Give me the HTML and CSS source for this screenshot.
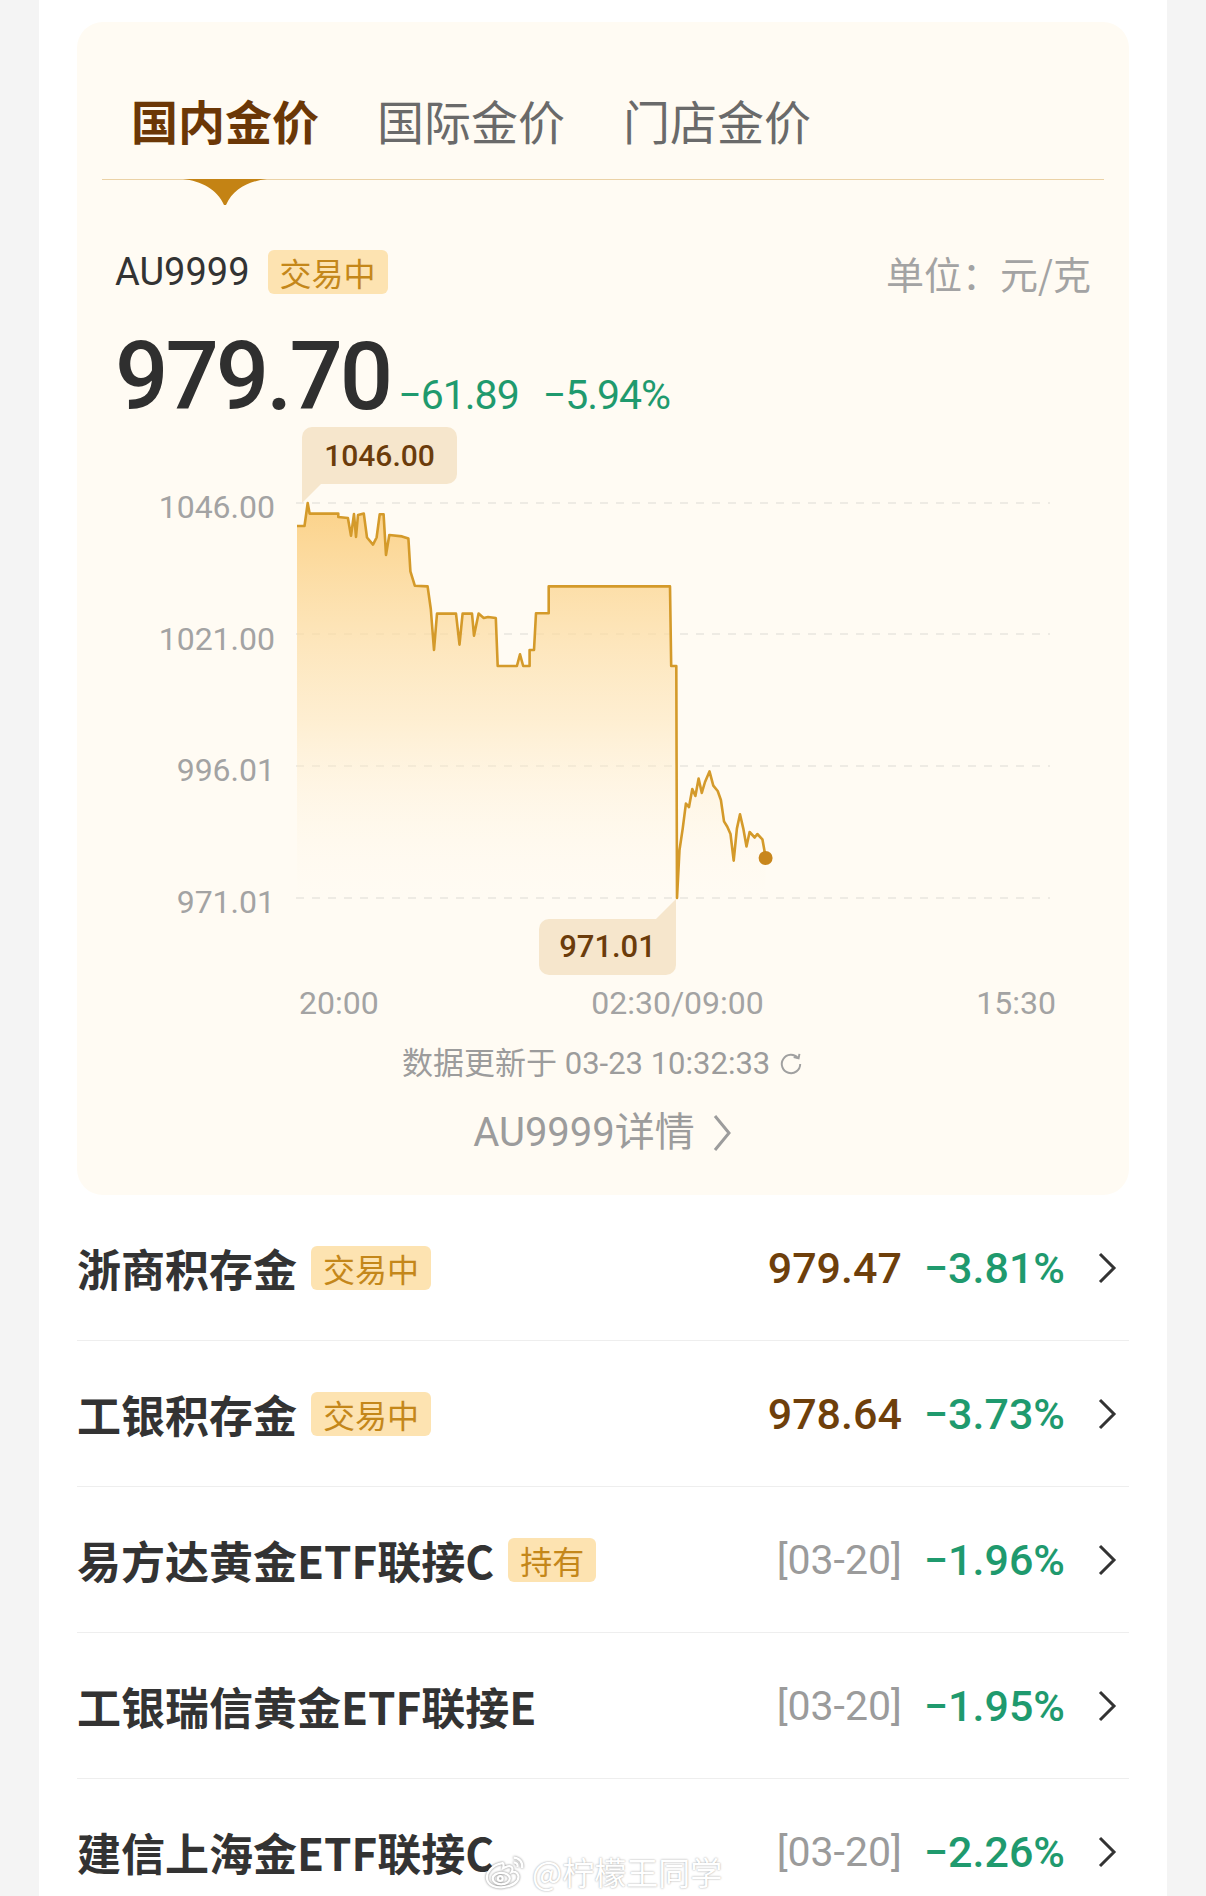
FILE: index.html
```html
<!DOCTYPE html>
<html lang="zh-CN">
<head>
  <meta charset="UTF-8">
  <meta name="viewport" content="width=device-width, initial-scale=1.0">
  <title>黄金行情</title>
  <link rel="stylesheet" href="styles.css">
</head>
<body>
  <div class="page">
    <section class="gold-card">
      <nav class="tabs">
        <span class="tab active">国内金价
          <svg class="tab-arrow" width="84" height="26" viewBox="0 0 84 26"><path d="M0 0H84C66 2 50 10 43 26H41C34 10 18 2 0 0Z" fill="#c48314"/></svg>
        </span>
        <span class="tab">国际金价</span>
        <span class="tab">门店金价</span>
      </nav>

      <div class="quote-head">
        <span class="code">AU9999</span>
        <span class="tag">交易中</span>
        <span class="unit">单位：元/克</span>
      </div>

      <div class="quote-price">
        <span class="price">979.70</span>
        <span class="change">−61.89</span>
        <span class="change">−5.94%</span>
      </div>

      <div class="chart">
        <div class="y-axis">
          <span>1046.00</span>
          <span>1021.00</span>
          <span>996.01</span>
          <span>971.01</span>
        </div>
        <div class="plot">
          <svg width="754" height="555" viewBox="296 421 754 555">
            <defs>
              <linearGradient id="fade" x1="0" y1="503" x2="0" y2="898" gradientUnits="userSpaceOnUse">
                <stop offset="0" stop-color="#fbcd7c" stop-opacity="0.9"/>
                <stop offset="0.55" stop-color="#fde4b6" stop-opacity="0.55"/>
                <stop offset="1" stop-color="#fff6e6" stop-opacity="0"/>
              </linearGradient>
            </defs>
            <g stroke="#e9e6e0" stroke-width="1.5" stroke-dasharray="8 8">
              <line x1="296" y1="503" x2="1050" y2="503"/>
              <line x1="296" y1="634" x2="1050" y2="634"/>
              <line x1="296" y1="766" x2="1050" y2="766"/>
              <line x1="296" y1="898" x2="1050" y2="898"/>
            </g>
            <path fill="url(#fade)" d="M297 526 L304.5 526 L307.7 503 L309.6 513.6 L338.3 513.6 L338.3 517 L347.9 518 L351 535.7 L354 514 L356 537 L358 515 L363.8 513.6 L367 537.5 L373 544.6 L376.6 537.5 L379.7 514.3 L383.6 514.3 L386 555 L389.3 535 L402 536.4 L408.4 538.6 L410.4 571.4 L414.8 585.7 L427.6 586.4 L430.8 609 L434 650 L437 613.6 L456 613.6 L459.5 644.6 L462.6 613.6 L472 613.6 L474 635.7 L478.6 613.6 L483.7 618 L488 617 L495.8 618 L497.7 666 L516.9 666 L520 654.3 L523.2 666 L529.6 666 L529.6 650 L534 650 L536 613.2 L548.7 613.2 L548.7 586.4 L670 586.4 L671.2 666 L676.3 666 L677 898 L679.5 850 L682.7 828.6 L685.9 803.6 L689 807 L692.3 789 L695.4 796 L698.6 778.6 L701.8 792.9 L705 782 L709.5 771.4 L713.3 785.7 L717.7 791 L720.9 800 L724 821.4 L727.3 826.8 L730.5 834 L733.7 860.7 L736.9 828.6 L740 814.3 L743.3 828.6 L746.5 846.4 L749.6 832 L754.7 837.5 L757.3 834 L762.4 839.3 L765.6 857 L765.6 898 L297 898Z"/>
            <path fill="none" stroke="#d49a2a" stroke-width="2.6" stroke-linejoin="round" d="M297 526 L304.5 526 L307.7 503 L309.6 513.6 L338.3 513.6 L338.3 517 L347.9 518 L351 535.7 L354 514 L356 537 L358 515 L363.8 513.6 L367 537.5 L373 544.6 L376.6 537.5 L379.7 514.3 L383.6 514.3 L386 555 L389.3 535 L402 536.4 L408.4 538.6 L410.4 571.4 L414.8 585.7 L427.6 586.4 L430.8 609 L434 650 L437 613.6 L456 613.6 L459.5 644.6 L462.6 613.6 L472 613.6 L474 635.7 L478.6 613.6 L483.7 618 L488 617 L495.8 618 L497.7 666 L516.9 666 L520 654.3 L523.2 666 L529.6 666 L529.6 650 L534 650 L536 613.2 L548.7 613.2 L548.7 586.4 L670 586.4 L671.2 666 L676.3 666 L677 898 L679.5 850 L682.7 828.6 L685.9 803.6 L689 807 L692.3 789 L695.4 796 L698.6 778.6 L701.8 792.9 L705 782 L709.5 771.4 L713.3 785.7 L717.7 791 L720.9 800 L724 821.4 L727.3 826.8 L730.5 834 L733.7 860.7 L736.9 828.6 L740 814.3 L743.3 828.6 L746.5 846.4 L749.6 832 L754.7 837.5 L757.3 834 L762.4 839.3 L765.6 857"/>
            <circle cx="765.6" cy="858" r="7" fill="#c8861c"/>
            <!-- tooltip pointers -->
            <polygon points="302,483 322,483 302,503" fill="#f6e6cc"/>
            <polygon points="676,919 656,919 676,899" fill="#f6e6cc"/>
          </svg>
          <div class="tip tip-high">1046.00</div>
          <div class="tip tip-low">971.01</div>
        </div>
      </div>

      <div class="x-axis">
        <span>20:00</span>
        <span>02:30/09:00</span>
        <span>15:30</span>
      </div>

      <p class="update">数据更新于 03-23 10:32:33
        <svg width="26" height="26" viewBox="0 0 24 24"><path d="M18.5 6.5A8.5 8.5 0 1 0 20.5 12" fill="none" stroke="#a0a0a0" stroke-width="1.8"/><path d="M14.5 5.5L19 6.8L19.8 2.6" fill="none" stroke="#a0a0a0" stroke-width="1.8"/></svg>
      </p>

      <a class="detail">AU9999详情
        <svg width="22" height="40" viewBox="0 0 22 40"><polyline points="4,3 18,20 4,37" fill="none" stroke="#9c9c9c" stroke-width="3"/></svg>
      </a>
    </section>

    <ul class="fund-list">
      <li class="fund">
        <span class="name">浙商积存金</span>
        <span class="tag">交易中</span>
        <span class="value">979.47</span>
        <span class="pct">−3.81%</span>
        <svg class="arrow" width="24" height="36" viewBox="0 0 24 36"><polyline points="5,4 19,18 5,32" fill="none" stroke="#333" stroke-width="3"/></svg>
      </li>
      <li class="fund">
        <span class="name">工银积存金</span>
        <span class="tag">交易中</span>
        <span class="value">978.64</span>
        <span class="pct">−3.73%</span>
        <svg class="arrow" width="24" height="36" viewBox="0 0 24 36"><polyline points="5,4 19,18 5,32" fill="none" stroke="#333" stroke-width="3"/></svg>
      </li>
      <li class="fund">
        <span class="name">易方达黄金ETF联接C</span>
        <span class="tag">持有</span>
        <span class="date">[03-20]</span>
        <span class="pct">−1.96%</span>
        <svg class="arrow" width="24" height="36" viewBox="0 0 24 36"><polyline points="5,4 19,18 5,32" fill="none" stroke="#333" stroke-width="3"/></svg>
      </li>
      <li class="fund">
        <span class="name">工银瑞信黄金ETF联接E</span>
        <span class="date">[03-20]</span>
        <span class="pct">−1.95%</span>
        <svg class="arrow" width="24" height="36" viewBox="0 0 24 36"><polyline points="5,4 19,18 5,32" fill="none" stroke="#333" stroke-width="3"/></svg>
      </li>
      <li class="fund">
        <span class="name">建信上海金ETF联接C</span>
        <span class="date">[03-20]</span>
        <span class="pct">−2.26%</span>
        <svg class="arrow" width="24" height="36" viewBox="0 0 24 36"><polyline points="5,4 19,18 5,32" fill="none" stroke="#333" stroke-width="3"/></svg>
      </li>
    </ul>

    <div class="watermark">
      <svg width="44" height="38" viewBox="0 0 46 40">
        <g fill="none" stroke="#fff" stroke-width="2.4">
          <path d="M18 12C8 14 2 22 3 28C4 35 12 38 20 37C30 36 37 31 36 25C35 21 31 20 29 21C31 17 29 14 25 15C22 16 20 17 20 17C21 13 20 11 18 12Z"/>
          <ellipse cx="18" cy="28" rx="9" ry="6"/>
          <circle cx="17" cy="28" r="2.5"/>
          <path d="M31 6C37 6 41 11 40 17"/>
          <path d="M31 11C34 11 36 13 35 16"/>
        </g>
      </svg>
      <span>@柠檬王同学</span>
    </div>
  </div>
</body>
</html>
```

FILE: styles.css
```css
body {
  margin: 0;
  background: #f4f4f4;
  font-family: "Roboto", "Noto Sans CJK SC", sans-serif;
  color: #333;
}

.page {
  position: relative;
  width: 1128px;
  min-height: 1896px;
  margin: 0 auto;
  padding: 22px 38px 0;
  box-sizing: border-box;
  background: #fff;
  overflow: hidden;
}

/* 金价卡片 */
.gold-card {
  background: #fffbf3;
  border-radius: 26px;
  padding: 0 38px 37px;
}

.tabs {
  display: flex;
  gap: 58px;
  margin: 0 -13px;
  padding: 70px 0 31px 29px;
  border-bottom: 1px solid #ebd2a6;
}

.tab {
  position: relative;
  font-family: "Noto Sans CJK SC", sans-serif;
  font-size: 47px;
  line-height: 56px;
  color: #6a6a6a;
}

.tab.active {
  color: #6b3706;
  font-weight: 700;
}

.tab-arrow {
  position: absolute;
  left: 50%;
  top: calc(100% + 31px);
  margin-left: -42px;
}

.quote-head {
  display: flex;
  align-items: center;
  height: 44px;
  margin-top: 70px;
}

.code {
  font-size: 38px;
  color: #333;
}

.tag {
  display: inline-block;
  height: 44px;
  padding: 0 12px;
  margin-left: 18px;
  border-radius: 6px;
  background: #fde3b1;
  color: #c4871a;
  font-family: "Noto Sans CJK SC", sans-serif;
  font-size: 32px;
  line-height: 44px;
}

.unit {
  margin-left: auto;
  font-family: "Noto Sans CJK SC", sans-serif;
  font-size: 38px;
  color: #a3a3a3;
}

.quote-price {
  display: flex;
  align-items: baseline;
  margin-top: 39px;
  height: 88px;
  line-height: 88px;
}

.price {
  font-size: 94px;
  font-weight: 500;
  letter-spacing: -3px;
  color: #2f2f2f;
}

.change {
  font-size: 41px;
  line-height: 44px;
  letter-spacing: -1px;
  color: #1f9a6e;
  margin-left: 8px;
}

.change + .change {
  margin-left: 24px;
}

/* 走势图 */
.chart {
  display: flex;
  gap: 21px;
  height: 555px;
}

.y-axis {
  width: 160px;
  display: flex;
  flex-direction: column;
  align-items: flex-end;
  gap: 91.7px;
  padding-top: 66px;
}

.y-axis span {
  font-size: 32px;
  line-height: 40px;
  color: #a3a3a3;
}

.plot {
  position: relative;
  width: 754px;
}

.plot svg {
  display: block;
}

.tip {
  position: absolute;
  background: #f6e6cc;
  color: #6b3c0b;
  font-weight: 500;
  text-align: center;
}

.tip-high {
  left: 6px;
  top: 6px;
  width: 155px;
  height: 57px;
  font-size: 30px;
  line-height: 57px;
  border-radius: 10px 10px 10px 0;
}

.tip-low {
  left: 243px;
  top: 498px;
  width: 137px;
  height: 56px;
  font-size: 31px;
  line-height: 56px;
  border-radius: 10px 0 10px 10px;
}

.x-axis {
  display: flex;
  justify-content: space-between;
  width: 757px;
  margin-left: 184px;
  line-height: 54px;
  font-size: 32px;
  color: #a3a3a3;
}

.update {
  margin: 14px 0 0;
  text-align: center;
  font-size: 31px;
  line-height: 40px;
  color: #9c9c9c;
}

.update svg {
  vertical-align: -3px;
}

.detail {
  display: flex;
  justify-content: center;
  align-items: center;
  gap: 16px;
  margin-top: 24px;
  font-size: 40px;
  line-height: 50px;
  color: #9c9c9c;
}

/* 基金列表 */
.fund-list {
  list-style: none;
  margin: 0;
  padding: 0;
}

.fund {
  display: flex;
  align-items: center;
  height: 145px;
  border-bottom: 1px solid #eeeeee;
}

.name {
  font-family: "Noto Sans CJK SC", sans-serif;
  font-size: 44px;
  font-weight: 700;
  color: #333;
}

.fund .tag {
  margin-left: 14px;
}

.value,
.date {
  margin-left: auto;
  font-size: 43px;
}

.value {
  font-weight: 500;
  color: #6e3f0b;
}

.date {
  font-size: 41px;
  color: #9b9b9b;
}

.pct {
  margin-left: 22px;
  font-size: 43px;
  font-weight: 500;
  color: #1f9a6e;
}

.arrow {
  margin-left: 30px;
  margin-right: 10px;
}

.watermark {
  position: absolute;
  left: 445px;
  top: 1848px;
  display: flex;
  align-items: center;
  gap: 4px;
  font-family: "Noto Sans CJK SC", sans-serif;
  font-size: 32px;
  color: #fff;
  text-shadow: 0 0 2px rgba(0, 0, 0, 0.4);
}

.watermark svg {
  filter: drop-shadow(0 0 1px rgba(0, 0, 0, 0.5));
}
```
